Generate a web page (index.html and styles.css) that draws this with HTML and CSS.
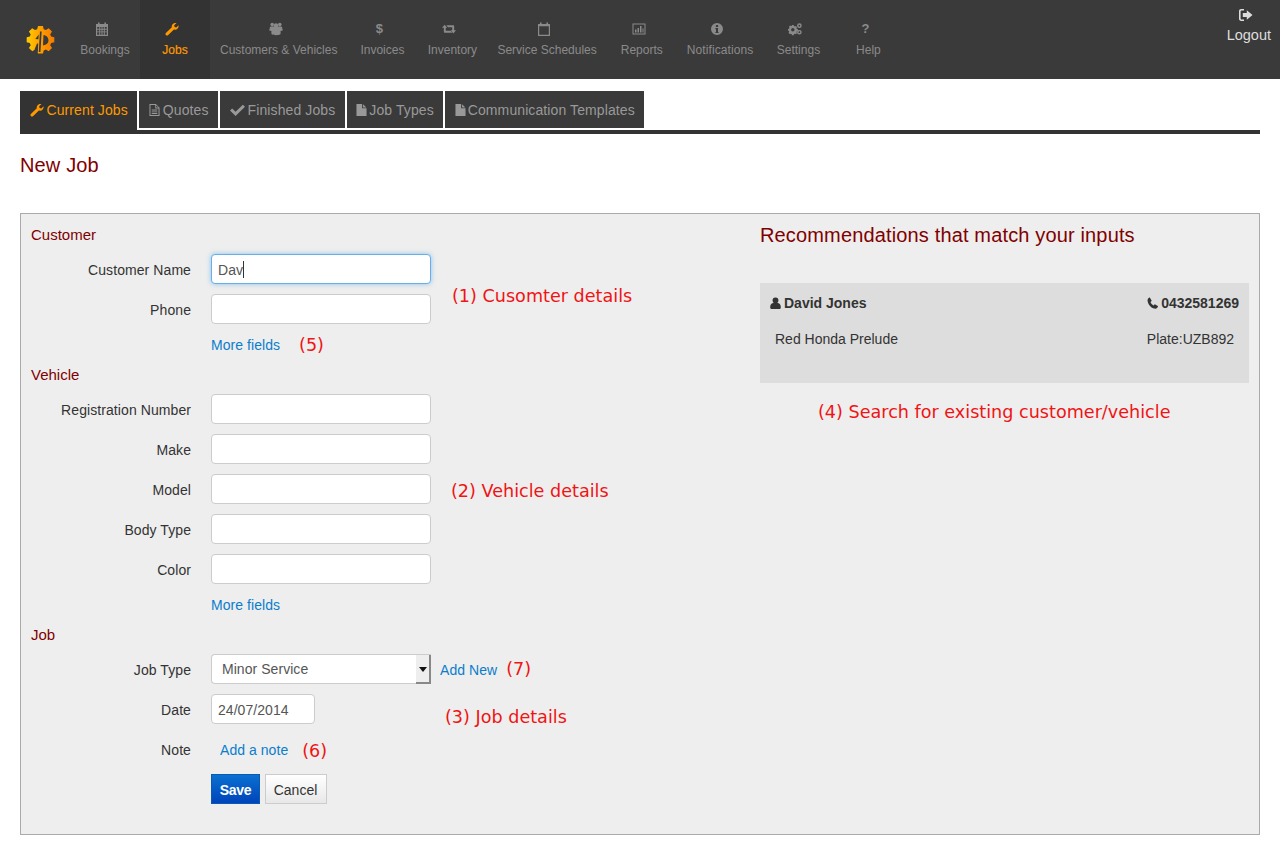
FILE: index.html
```html
<!DOCTYPE html>
<html lang="en">
<head>
<meta charset="utf-8">
<title>New Job</title>
<link rel="stylesheet" href="styles.css">
</head>
<body>
<svg class="sprite" xmlns="http://www.w3.org/2000/svg">
  <symbol id="i-calendar" viewBox="0 0 14 14"><path fill-rule="evenodd" d="M1 2h2V0.500h1.600V2h4.800V0.500H11V2h2v12H1zM2.200 5v1.800h2V5zm3 0v1.800h1.300V5zm2.300 0v1.800h1.300V5zm2.300 0v1.800h2V5zM2.200 7.700v1.700h2V7.700zm3 0v1.700h1.300V7.700zm2.300 0v1.700h1.300V7.700zm2.300 0v1.700h2V7.700zM2.200 10.300v2.500h2v-2.500zm3 0v2.500h1.300v-2.500zm2.300 0v2.500h1.300v-2.500zm2.300 0v2.500h2v-2.500z"/></symbol>
  <symbol id="i-wrench" viewBox="0 0 16 16"><path d="M1 12.600 7.800 6C7.200 3.200 9.600.6 13.200 1.100L10.500 3.800l.4 2 2 .5 2.600-2.600c.5 3.400-2.400 5.800-5.300 5L3.400 15c-.7.7-1.600.7-2.300 0-.7-.7-.8-1.700-.1-2.400z"/></symbol>
  <symbol id="i-users" viewBox="0 0 14 14"><circle cx="3.200" cy="2.600" r="1.800"/><circle cx="10.800" cy="2.600" r="1.800"/><circle cx="7" cy="3.400" r="2.200"/><path d="M1 5C1 4.400 2 4.300 3 4.600H11C12 4.300 13 4.400 13 5L13.800 8.500 11.600 9V12C10 13.600 4 13.600 2.400 12V9L.2 8.500Z"/></symbol>
  <symbol id="i-retweet" viewBox="0 0 16 12"><path d="M3 1 6 4.500H4.300V8H10L11.800 10.200H3.500C2.600 10.200 2.100 9.700 2.100 8.800V4.500H0Z"/><path d="M5 1.800H12.500C13.400 1.800 13.900 2.300 13.900 3.200V7.500H16L13 11 10 7.500H11.700V4H6.800Z"/></symbol>
  <symbol id="i-calendar-o" viewBox="0 0 14 14"><path fill-rule="evenodd" d="M1 2h2V.4h1.600V2h4.800V.4H11V2h2v12H1zM2.200 4.200v8.600h9.600V4.200z"/></symbol>
  <symbol id="i-chart" viewBox="0 0 14 14"><path fill-rule="evenodd" d="M.5 1.500h13v11H.5zM1.500 2.500v9h11v-9z"/><path d="M3 7.500h1.500v3H3zM5.500 6h1.500v4.500H5.500zM8 4h1.500v6.500H8zM10.500 6.500H11.500v4h-1z"/></symbol>
  <symbol id="i-info" viewBox="0 0 14 14"><path fill-rule="evenodd" d="M7 1a6 6 0 1 1 0 12A6 6 0 0 1 7 1zM5.900 3v1.900h2.200V3zM5.400 6v1.200h.6v2.700h-.6v1.200h3.200V9.900H8V6z"/></symbol>
  <symbol id="i-cogs" viewBox="0 0 16 14"><path fill-rule="evenodd" d="M4.500 2.500h2l.3 1.200 1.200.5 1-.6 1.300 1.300-.6 1 .5 1.200 1.200.3v1.800l-1.200.3-.5 1.200.6 1-1.300 1.300-1-.6-1.200.5-.3 1.200h-2l-.3-1.200-1.200-.5-1 .6L.7 11.200l.6-1-.5-1.200L0 8.700V6.900l1.200-.3.500-1.200-.6-1L2.400 3.100l1 .6 1.200-.5zM5.500 5.800a2 2 0 1 0 0 4 2 2 0 0 0 0-4z"/><path fill-rule="evenodd" d="M13 .5a2.700 2.700 0 1 1 0 5.400A2.700 2.700 0 0 1 13 .5zm0 1.700a1 1 0 1 0 0 2 1 1 0 0 0 0-2zM13 8a2.700 2.700 0 1 1 0 5.400A2.700 2.700 0 0 1 13 8zm0 1.700a1 1 0 1 0 0 2 1 1 0 0 0 0-2z"/></symbol>
  <symbol id="i-logout" viewBox="0 0 14 12"><path d="M5 0v1.600H2.500c-.6 0-.9.4-.9.900v7c0 .5.300.9.900.900H5V12H2.300C.9 12 0 11.100 0 9.800V2.200C0 .9.900 0 2.300 0z"/><path d="M7.800 1.200 13.500 6l-5.700 4.800V8H3.800V4h4z"/></symbol>
  <symbol id="i-file-text" viewBox="0 0 12 14"><path fill-rule="evenodd" d="M.5.500h7l4 4v9H.5zM1.600 1.600v10.800h8.800V5.400H6.800V1.600zM7.800 1.900v2.500h2.500z"/><path d="M3 6.500h6v1H3zM3 8.500h6v1H3zM3 10.400h6v1H3z"/></symbol>
  <symbol id="i-check" viewBox="0 0 14 12"><path d="M0 6.500 2 4.500 5.200 7.700 12 1l2 2-8.800 8.500z"/></symbol>
  <symbol id="i-file" viewBox="0 0 12 14"><path d="M.5.500h6.200v4.700h4.800v8.300H.5zM7.700.7l3.600 3.500H7.700z"/></symbol>
  <symbol id="i-user" viewBox="0 0 12 14"><path d="M6 1a3.200 3.200 0 0 1 3.200 3.300A3.400 3.400 0 0 1 8 7c2.600.200 3.800 1.700 3.800 4.800 0 1-.6 1.700-1.700 1.700H1.900C.8 13.500.2 12.800.2 11.800.2 8.700 1.400 7.200 4 7a3.400 3.400 0 0 1-1.200-2.700A3.200 3.200 0 0 1 6 1z"/></symbol>
  <symbol id="i-phone" viewBox="0 0 12 14"><path d="M3.200 1.200 5 4.200c.1.300 0 .6-.2.800l-1 1c.5 1.500 1.900 3 3.400 3.600l1-1c.2-.2.500-.3.800-.1l2.800 1.800c.2.200.3.400.2.600-.4 1.300-1.600 2.300-2.700 2.300C5 13.200.6 8.300.6 3.900.6 2.800 1.600 1.500 2.600 1c.2-.1.500 0 .6.200z"/></symbol>
</svg>

<header class="topbar">
  <a class="logo" href="#" aria-label="Home">
    <svg class="logo-mark" viewBox="0 0 30 30" width="30" height="30" xmlns="http://www.w3.org/2000/svg">
      <defs><linearGradient id="logo-grad" x1="0" x2="1" y1="0" y2="0"><stop offset="0" stop-color="#ffcc00"/><stop offset=".55" stop-color="#ff9a00"/><stop offset="1" stop-color="#f57a00"/></linearGradient></defs>
      <path fill="url(#logo-grad)" d="M12 1h5l.7 3.200 2.200.900 2.800-1.800 3.300 3.300-1.800 2.800.900 2.200 3.200.7v5l-3.200.7-.9 2.200 1.800 2.800-3.300 3.300-2.800-1.800-2.200.9-.7 3.200h-5l-.7-3.200-2.200-.9-2.800 1.800L2.900 23l1.800-2.800-.9-2.200L.7 17.300v-5l3.100-.7.900-2.200L2.900 6.600l3.300-3.300L9 5.100l2.200-.9z"/>
      <path fill="none" stroke="#3a3a3a" stroke-width="1.700" d="M14.800 6.500 13.600 27"/>
      <path fill="#3a3a3a" d="M9.300 14 12.800 9.500 12.400 14.300zM8.500 24.500 11 18.500 12.200 18.500 11.900 27zM17.500 10C21 10.500 22.500 13 22.500 15.500 22.500 18 20.500 20 17 20.500z"/>
    </svg>
  </a>
  <nav class="mainnav">
    <a class="nav-item" href="#"><span class="nav-icon"><svg class="ic-14"><use href="#i-calendar"/></svg></span>Bookings</a>
    <a class="nav-item active" href="#"><span class="nav-icon"><svg class="ic-14"><use href="#i-wrench"/></svg></span>Jobs</a>
    <a class="nav-item" href="#"><span class="nav-icon"><svg class="ic-14"><use href="#i-users"/></svg></span>Customers &amp; Vehicles</a>
    <a class="nav-item" href="#"><span class="nav-icon glyph">$</span>Invoices</a>
    <a class="nav-item" href="#"><span class="nav-icon"><svg class="ic-14"><use href="#i-retweet"/></svg></span>Inventory</a>
    <a class="nav-item" href="#"><span class="nav-icon"><svg class="ic-14"><use href="#i-calendar-o"/></svg></span>Service Schedules</a>
    <a class="nav-item" href="#"><span class="nav-icon"><svg class="ic-14"><use href="#i-chart"/></svg></span>Reports</a>
    <a class="nav-item wide" href="#"><span class="nav-icon"><svg class="ic-14"><use href="#i-info"/></svg></span>Notifications</a>
    <a class="nav-item" href="#"><span class="nav-icon"><svg class="ic-14"><use href="#i-cogs"/></svg></span>Settings</a>
    <a class="nav-item" href="#"><span class="nav-icon glyph">?</span>Help</a>
  </nav>
  <a class="logout" href="#"><svg class="ic-logout"><use href="#i-logout"/></svg>Logout</a>
</header>

<main class="page">
  <div class="tabs">
    <a class="tab active" href="#"><svg class="tab-ic"><use href="#i-wrench"/></svg>Current Jobs</a>
    <a class="tab" href="#"><svg class="tab-ic narrow"><use href="#i-file-text"/></svg>Quotes</a>
    <a class="tab" href="#"><svg class="tab-ic wide"><use href="#i-check"/></svg>Finished Jobs</a>
    <a class="tab" href="#"><svg class="tab-ic narrow tight"><use href="#i-file"/></svg>Job Types</a>
    <a class="tab" href="#"><svg class="tab-ic narrow tight"><use href="#i-file"/></svg>Communication Templates</a>
  </div>

  <h1 class="page-title">New Job</h1>

  <section class="panel">
    <form class="job-form">
      <h2 class="section-title">Customer</h2>
      <div class="row">
        <label class="row-label">Customer Name</label>
        <div class="field-wrap"><input class="input focus" type="text" value="Dav"><span class="caret"></span></div>
      </div>
      <div class="row">
        <label class="row-label">Phone</label>
        <input class="input" type="text">
      </div>
      <div class="row row-link">
        <span class="row-label"></span>
        <a class="link" href="#">More fields</a>
        <span class="note note-5">(5)</span>
      </div>

      <h2 class="section-title">Vehicle</h2>
      <div class="row"><label class="row-label">Registration Number</label><input class="input" type="text"></div>
      <div class="row"><label class="row-label">Make</label><input class="input" type="text"></div>
      <div class="row"><label class="row-label">Model</label><input class="input" type="text"></div>
      <div class="row"><label class="row-label">Body Type</label><input class="input" type="text"></div>
      <div class="row"><label class="row-label">Color</label><input class="input" type="text"></div>
      <div class="row row-link">
        <span class="row-label"></span>
        <a class="link" href="#">More fields</a>
      </div>

      <h2 class="section-title">Job</h2>
      <div class="row">
        <label class="row-label">Job Type</label>
        <div class="select"><span class="select-value">Minor Service</span><span class="select-arrow"></span></div>
        <a class="link add-new" href="#">Add New</a>
        <span class="note note-7">(7)</span>
      </div>
      <div class="row">
        <label class="row-label">Date</label>
        <input class="input input-date" type="text" value="24/07/2014">
      </div>
      <div class="row">
        <label class="row-label">Note</label>
        <a class="link add-note" href="#">Add a note</a>
        <span class="note note-6">(6)</span>
      </div>
      <div class="row row-buttons">
        <span class="row-label"></span>
        <button class="btn btn-primary" type="button">Save</button>
        <button class="btn btn-default" type="button">Cancel</button>
      </div>
      <span class="note float note-1">(1) Cusomter details</span>
      <span class="note float note-2">(2) Vehicle details</span>
      <span class="note float note-3">(3) Job details</span>
    </form>

    <aside class="recs">
      <h2 class="recs-title">Recommendations that match your inputs</h2>
      <div class="rec-card">
        <div class="rec-head">
          <span class="rec-strong"><svg class="rec-ic"><use href="#i-user"/></svg>David Jones</span>
          <span class="rec-strong"><svg class="rec-ic"><use href="#i-phone"/></svg>0432581269</span>
        </div>
        <div class="rec-body">
          <span>Red Honda Prelude</span>
          <span>Plate:UZB892</span>
        </div>
      </div>
      <p class="note note-4">(4) Search for existing customer/vehicle</p>
    </aside>
  </section>
</main>
</body>
</html>
```
FILE: styles.css
```css
* { box-sizing: border-box; }
html, body { margin: 0; padding: 0; background: #fff; }
body { font-family: "Liberation Sans", Arial, sans-serif; font-size: 14px; color: #333; }
a { text-decoration: none; }
.sprite { position: absolute; width: 0; height: 0; overflow: hidden; }
svg { fill: currentColor; }

.topbar { display: flex; height: 79px; background: #3a3a3a; }
.logo { width: 70px; height: 79px; display: flex; align-items: center; justify-content: center; padding: 0 0 0 11px; }
.mainnav { display: flex; }
.nav-item { display: flex; flex-direction: column; align-items: center; min-width: 70px; height: 79px; padding: 22px 10px 0; font-size: 12px; line-height: 16px; color: #8a8a8a; white-space: nowrap; }
.nav-item.active { background: #333; color: #f90; -webkit-text-stroke: .2px #f90; }
.nav-item.wide { letter-spacing: .1px; }
.nav-icon { display: flex; align-items: center; justify-content: center; height: 14px; margin-bottom: 6px; padding-right: 6px; }
.ic-14 { width: 14px; height: 14px; }
.glyph { font-size: 13px; font-weight: bold; line-height: 14px; }
.logout { margin-left: auto; display: flex; flex-direction: column; align-items: center; padding: 9px 9px 0 0; font-size: 14.5px; line-height: 18px; color: #ddd; }
.ic-logout { width: 14px; height: 12px; margin: 0 5px 5px 0; }

.page { padding: 12px 20px 0; }
.tabs { display: flex; gap: 2px; height: 43px; padding-bottom: 2px; border-bottom: 4px solid #333; }
.tab { display: flex; align-items: center; height: 37px; padding: 0 9.5px; background: #3a3a3a; color: #999; letter-spacing: .1px; white-space: nowrap; }
.tab.active { height: 39px; padding-bottom: 2px; color: #f90; background: #333; }
.tab-ic { flex: none; width: 14px; height: 14px; margin-right: 3px; }
.tab-ic.narrow { width: 11px; }
.tab-ic.wide { width: 15px; }
.tab-ic.tight { margin-right: 2px; }

.page-title { margin: 20px 0 37px; font-size: 20px; line-height: 22px; font-weight: normal; letter-spacing: .15px; color: #800000; }

.panel { position: relative; display: grid; grid-template-columns: 1fr 489px; height: 622px; padding: 10px; background: #eee; border: 1px solid #aaa; }
.section-title { margin: 0 0 9px; padding-top: 1px; font-size: 15px; line-height: 20px; font-weight: normal; color: #800000; }
.row { display: flex; align-items: center; height: 30px; margin-bottom: 10px; }
.row-label { flex: none; width: 160px; margin-right: 20px; padding-top: 2px; text-align: right; letter-spacing: .08px; }
.row-link { height: 20px; }
.input { display: block; width: 220px; height: 30px; padding: 6px 6px 4px; font: 14px "Liberation Sans", Arial, sans-serif; letter-spacing: .05px; color: #555; background: #fff; border: 1px solid #ccc; border-radius: 4px; }
.input.focus { border-color: #66afe9; box-shadow: 0 0 5px rgba(102, 175, 233, .7); outline: 0; }
.input-date { width: 104px; }
.field-wrap { position: relative; }
.caret { position: absolute; left: 32px; top: 7px; width: 1px; height: 17px; background: #333; }
.link { padding-top: 2px; letter-spacing: .05px; color: #0a7dcc; }
.select { position: relative; display: flex; align-items: center; width: 220px; height: 30px; padding-left: 10px; letter-spacing: .05px; color: #555; background: #fff; border: 1px solid #ccc; border-right: 0; border-radius: 4px 0 0 4px; }
.select-arrow { position: absolute; right: 0; top: 0; bottom: -1px; width: 15px; background: #eee; border-right: 2px solid #888; border-bottom: 2px solid #888; }
.select-arrow::after { content: ""; position: absolute; left: 3px; top: 12px; border: 4px solid transparent; border-top: 5px solid #111; border-bottom: 0; }
.add-new { margin-left: 9px; }
.add-note { margin-left: 9px; }
.row-buttons { margin-bottom: 0; gap: 5px; }
.row-buttons .row-label { margin-right: 15px; }
.btn { height: 30px; padding: 2px 0 0; font: 14px "Liberation Sans", Arial, sans-serif; cursor: pointer; }
.btn-primary { width: 49px; font-weight: bold; letter-spacing: -.3px; color: #fff; background: linear-gradient(#0a70d0, #0044bb); border: 1px solid #0a5ab0; }
.btn-default { width: 62px; padding-right: 1px; color: #333; background: linear-gradient(#fff, #e8e8e8); border: 1px solid #ccc; }

.note { font-family: "DejaVu Sans", sans-serif; font-size: 17.6px; line-height: 20px; color: #f01414; white-space: nowrap; }
.note-5 { margin: 2px 0 0 19px; }
.note-7 { margin-left: 9px; }
.note-6 { margin: 4px 0 0 14px; }
.job-form { position: relative; }
.float { position: absolute; }
.note-1 { left: 421px; top: 62px; }
.note-2 { left: 420px; top: 257px; }
.note-3 { left: 414px; top: 483px; }

.recs-title { margin: 0 0 37px; font-size: 20px; line-height: 22px; font-weight: normal; letter-spacing: .15px; color: #800000; }
.rec-card { height: 100px; padding: 10px 10px 0; background: #ddd; }
.rec-head, .rec-body { display: flex; justify-content: space-between; line-height: 20px; }
.rec-body { margin-top: 16px; padding: 0 5px; }
.rec-strong { display: flex; align-items: center; font-weight: bold; }
.rec-ic { width: 11px; height: 14px; margin-right: 3px; }
.note-4 { margin: 19px 0 0 58px; }
```
